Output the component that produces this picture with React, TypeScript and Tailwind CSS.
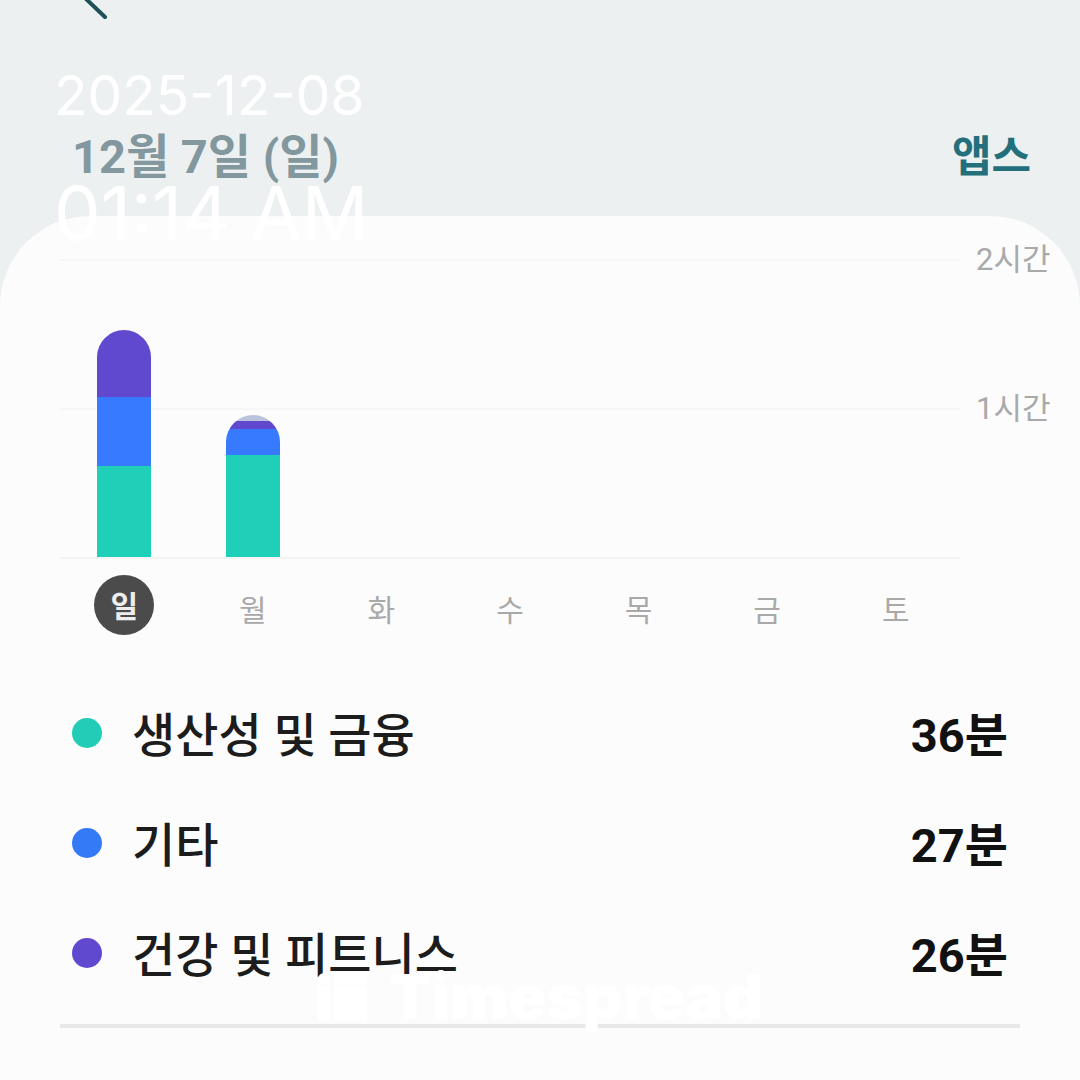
const korean = "font-['Roboto','Noto_Sans_CJK_KR',sans-serif]";

const days = [
  { name: '일', selected: true, segments: [['bg-[#6049cf]', 67], ['bg-[#387aff]', 69], ['bg-[#1fcfb8]', 91]] },
  { name: '월', segments: [['bg-[#b9c3dc]', 6], ['bg-[#6049cf]', 8], ['bg-[#387aff]', 26], ['bg-[#1fcfb8]', 102]] },
  { name: '화', segments: [] },
  { name: '수', segments: [] },
  { name: '목', segments: [] },
  { name: '금', segments: [] },
  { name: '토', segments: [] },
] as { name: string; selected?: boolean; segments: [string, number][] }[];

const categories = [
  { name: '생산성 및 금융', time: '36분', dot: 'bg-[#22ccb6]' },
  { name: '기타', time: '27분', dot: 'bg-[#347af7]' },
  { name: '건강 및 피트니스', time: '26분', dot: 'bg-[#6049cf]' },
];

const Header = () => (
  <header className="h-[216px]">
    <button type="button" aria-label="뒤로" className="block ml-[80px] h-5 w-8">
      <svg viewBox="0 0 32 20" className="h-5 w-8" fill="none" stroke="#1f4f58" strokeWidth="4" strokeLinecap="round">
        <path d="M4 -3L25 17" />
      </svg>
    </button>
    <div className="flex items-center justify-between pt-[103px] pl-[72px] pr-[49px]">
      <h1 className="text-[47px] leading-[68px] font-bold text-[#82979e]">12월 7일 (일)</h1>
      <a href="#apps" className="text-[43px] leading-[68px] font-bold text-[#246f7c]">앱스</a>
    </div>
  </header>
);

const Chart = () => (
  <section className="pt-[43px]">
    <div className="relative">
      {['2시간', '1시간'].map((label) => (
        <div key={label} className="flex h-[149px] items-start">
          <div className="flex-1 border-t-2 border-[#f6f6f6]" />
          <span className="h-0 w-[120px] pl-4 text-[31px] leading-[2px] text-[#a9a9a9]">{label}</span>
        </div>
      ))}
      <div className="mr-[120px] border-t-2 border-[#f4f4f4]" />

      {/* Bars */}
      <div className="absolute inset-y-0 left-0 right-[120px] grid grid-cols-7 items-end justify-items-center pb-[2px]">
        {days.map((day) => (
          <div key={day.name} className="w-[54px] overflow-hidden rounded-t-full">
            {day.segments.map(([color, height]) => (
              <div key={color} className={color} style={{ height }} />
            ))}
          </div>
        ))}
      </div>
    </div>

    {/* Week days */}
    <div className="mr-[120px] mt-4 grid grid-cols-7 justify-items-center">
      {days.map((day) => (
        <button
          key={day.name}
          type="button"
          className={
            day.selected
              ? 'size-[60px] rounded-full bg-[#4b4b4b] text-[30px] leading-[64px] font-bold text-[#ededed]'
              : 'size-[60px] text-[30px] leading-[72px] text-[#a9a9a9]'
          }
        >
          {day.name}
        </button>
      ))}
    </div>
  </section>
);

const CategoryList = () => (
  <ul className="mr-[60px] mt-[43px] border-b-4 border-[#e8e8e8] pb-4">
    {categories.map((category) => (
      <li key={category.name} className="flex h-[110px] items-center pl-3 pr-3">
        <span className={`size-[30px] rounded-full ${category.dot}`} />
        <span className="ml-[30px] flex-1 pt-1.5 text-[47px] leading-[68px] font-medium text-[#1c1c1c]">{category.name}</span>
        <span className="pt-1.5 text-[47px] leading-[68px] font-bold text-[#111111]">{category.time}</span>
      </li>
    ))}
  </ul>
);

const Watermark = () => (
  <>
    <div className="pointer-events-none absolute left-[54px] top-[60px] font-['Inter',sans-serif] text-white">
      <p className="text-[55px] leading-[70px]">2025-12-08</p>
      <p className="mt-[38px] text-[74px] leading-[90px]">01:14 AM</p>
    </div>
    <div className="pointer-events-none absolute inset-x-0 top-[959px] flex items-center justify-center gap-5 font-['Inter',sans-serif] text-white">
      <svg viewBox="0 0 52 52" className="size-[52px]" fill="currentColor">
        <circle cx="7" cy="8" r="6" />
        <path d="M1 15h12v35H1zM17 2h33v12H17zM17 15h33v35H17z" />
      </svg>
      <p className="text-[62px] leading-[76px] font-black">Timespread</p>
    </div>
  </>
);

export default function App() {
  return (
    <div className={`relative h-screen overflow-hidden bg-[#ecf0f1] ${korean}`}>
      <Header />
      <main className="min-h-screen rounded-t-[90px] bg-[#fcfcfc] pl-[60px]">
        <Chart />
        <CategoryList />
      </main>
      <Watermark />
    </div>
  );
}
